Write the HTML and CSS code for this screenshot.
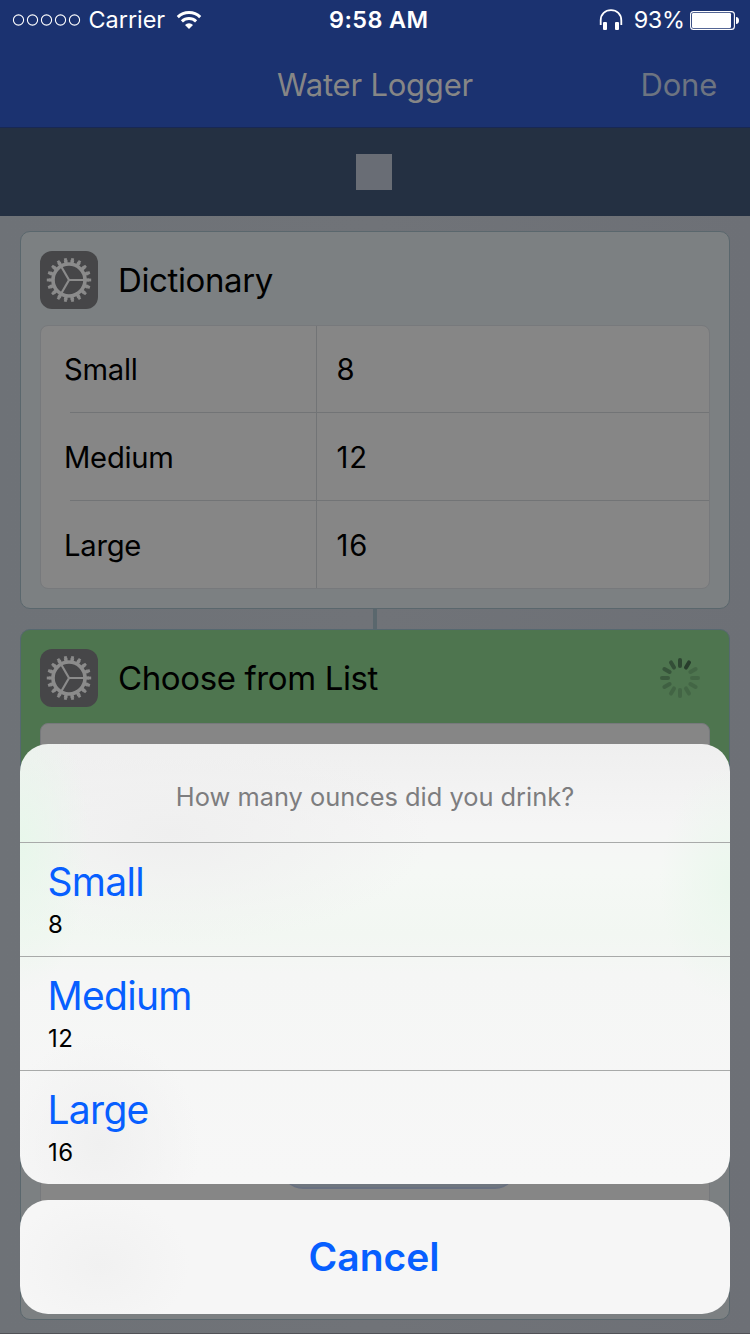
FILE: index.html
```html
<!DOCTYPE html>
<html lang="en">
<head>
<meta charset="utf-8">
<title>Water Logger</title>
<link rel="stylesheet" href="styles.css">
</head>
<body>
<svg width="0" height="0" class="defs" aria-hidden="true">
  <defs>
    <g id="gear">
      <circle r="16" fill="none" stroke="currentColor" stroke-width="3.6"/>
      <circle r="18.6" fill="none" stroke="currentColor" stroke-width="3.4" pathLength="180" stroke-dasharray="5.4 4.6" stroke-dashoffset="2.7"/>
      <circle r="21" fill="none" stroke="currentColor" stroke-width="2.4" pathLength="180" stroke-dasharray="3.8 6.2" stroke-dashoffset="1.9"/>
      <path d="M0 0H15M0 0L-7.5 -13M0 0L-7.5 13" stroke="currentColor" stroke-width="2.2" fill="none"/>
    </g>
  </defs>
</svg>
<div class="screen">
  <header class="nav">
    <div class="status">
      <div class="status-left">
        <svg class="dots" width="70" height="14" viewBox="0 0 70 14" fill="none" stroke="#fff" stroke-width="1.1"><circle cx="6.5" cy="7" r="5.1"/><circle cx="20.5" cy="7" r="5.1"/><circle cx="34.5" cy="7" r="5.1"/><circle cx="48.5" cy="7" r="5.1"/><circle cx="62.5" cy="7" r="5.1"/></svg>
        <span class="carrier">Carrier</span>
        <svg class="wifi" width="26" height="20" viewBox="0 0 26 20" fill="none" stroke="#fff" stroke-width="3"><path d="M1.8 7.1A16 16 0 0 1 24.2 7.1"/><path d="M5.9 11.3A10.3 10.3 0 0 1 20.1 11.3"/><path d="M13 19L9 14.9A5.8 5.8 0 0 1 17 14.9Z" fill="#fff" stroke="none"/></svg>
      </div>
      <span class="time">9:58 AM</span>
      <div class="status-right">
        <svg class="phones" width="24" height="22" viewBox="0 0 24 22"><path d="M1.7 16V11.5C1.7 5 6.2 1.2 12 1.2S22.3 5 22.3 11.5V16" fill="none" stroke="#fff" stroke-width="1.8"/><rect x="4" y="13" width="4" height="8" rx="1" fill="#fff"/><rect x="16" y="13" width="4" height="8" rx="1" fill="#fff"/></svg>
        <span class="percent">93%</span>
        <svg class="battery" width="50" height="20" viewBox="0 0 50 20"><rect x=".6" y="1.6" width="43.8" height="17.8" rx="3" fill="none" stroke="#fff" stroke-width="1.1"/><rect x="2" y="3" width="39" height="15" rx="1.3" fill="#fff"/><path d="M46 7Q49 7.4 49 10.5T46 14Z" fill="#fff"/></svg>
      </div>
    </div>
    <div class="titlebar"><span class="title">Water Logger</span><span class="done">Done</span></div>
  </header>
  <div class="runbar"><div class="stop"></div></div>
  <main class="flow">
    <section class="card card-dictionary">
      <div class="card-head">
        <svg class="icon" width="58" height="58" viewBox="-29 -29 58 58"><rect x="-29" y="-29" width="58" height="58" rx="12" fill="#464648"/><use href="#gear"/></svg>
        <h2 class="name">Dictionary</h2>
      </div>
      <div class="table">
        <div class="row"><span class="key">Small</span><span class="val">8</span></div>
        <div class="row"><span class="key">Medium</span><span class="val">12</span></div>
        <div class="row"><span class="key">Large</span><span class="val">16</span></div>
      </div>
    </section>
    <div class="link"></div>
    <section class="card card-choose">
      <div class="card-head">
        <svg class="icon" width="58" height="58" viewBox="-29 -29 58 58"><rect x="-29" y="-29" width="58" height="58" rx="12" fill="#464648"/><use href="#gear"/></svg>
        <h2 class="name">Choose from List</h2>
        <svg class="spinner" width="40" height="40" viewBox="-20 -20 40 40" stroke="#263b2b" stroke-width="4" stroke-linecap="round">
          <path d="M0-12V-18" opacity=".78"/><path d="M0-12V-18" transform="rotate(30)" opacity=".95"/><path d="M0-12V-18" transform="rotate(60)" opacity=".25"/><path d="M0-12V-18" transform="rotate(90)" opacity=".25"/><path d="M0-12V-18" transform="rotate(120)" opacity=".25"/><path d="M0-12V-18" transform="rotate(150)" opacity=".25"/><path d="M0-12V-18" transform="rotate(180)" opacity=".27"/><path d="M0-12V-18" transform="rotate(210)" opacity=".28"/><path d="M0-12V-18" transform="rotate(240)" opacity=".35"/><path d="M0-12V-18" transform="rotate(270)" opacity=".46"/><path d="M0-12V-18" transform="rotate(300)" opacity=".55"/><path d="M0-12V-18" transform="rotate(330)" opacity=".66"/>
        </svg>
      </div>
      <div class="panel"></div>
    </section>
    <div class="link"></div>
    <section class="card card-last"><div class="panel panel-last"><div class="pill"></div></div></section>
  </main>
</div>
<div class="overlay">
  <div class="sheet">
    <p class="prompt"><span>How many ounces did you drink?</span></p>
    <div class="option"><span class="label">Small</span><span class="sub">8</span></div>
    <div class="option"><span class="label">Medium</span><span class="sub">12</span></div>
    <div class="option"><span class="label">Large</span><span class="sub">16</span></div>
  </div>
  <div class="cancel"><span>Cancel</span></div>
</div>
</body>
</html>
```
FILE: styles.css
```css
* { box-sizing: border-box; }
body { margin: 0; width: 750px; height: 1334px; overflow: hidden; position: relative; font-family: Inter, "Liberation Sans", sans-serif; background: #707378; color: #000; }
.defs { position: absolute; }
.screen { height: 1334px; display: flex; flex-direction: column; background: linear-gradient(90deg, #6e7277, #707378 50%, #6d7076); border-bottom: 1px solid #515257; }
.nav { height: 128px; flex: none; background: #1b3270; border-bottom: 1px solid #182854; }
.status { height: 40px; display: grid; grid-template-columns: 1fr auto 1fr; align-items: center; padding: 0 10px 0 12px; color: #fff; font-size: 23.4px; line-height: 40px; }
.status-left, .status-right { display: flex; align-items: center; height: 40px; }
.status-right { justify-content: flex-end; }
.carrier { margin-left: 6.5px; }
.wifi { margin-left: 10.5px; }
.time { font-weight: 600; letter-spacing: .4px; margin-left: 5.5px; }
.percent { margin: 0 5.5px 0 11px; letter-spacing: -.4px; }
.titlebar { height: 88px; display: grid; grid-template-columns: 1fr auto 1fr; align-items: center; padding: 1px 33px 0; font-size: 31px; letter-spacing: -.22px; color: #868686; }
.title { grid-column: 2; }
.done { justify-self: end; color: #6d7481; }
.runbar { height: 88px; flex: none; background: #243042; display: flex; justify-content: center; align-items: center; padding-right: 2px; }
.stop { width: 36px; height: 36px; background: #696d75; }
.flow { padding: 15px 20px; display: flex; flex-direction: column; align-items: center; }
.card { width: 710px; flex: none; border: 1px solid #5a676d; border-radius: 10px; background: #7c8082; padding: 19px; }
.card-dictionary { height: 378px; }
.card-choose { height: 323px; background: #4e754f; border-color: #566870; }
.card-last { height: 348px; }
.card-head { height: 58px; display: flex; align-items: center; }
.icon { color: #8b8b8b; }
.name { margin: 0 auto 0 20px; font-size: 33px; font-weight: 400; line-height: 57px; letter-spacing: -.38px; }
.spinner { margin-right: 10px; }
.table { margin-top: 16px; height: 264px; border: 1px solid #77797c; border-radius: 8px; background: #868686; overflow: hidden; }
.row { height: 88px; display: flex; font-size: 29.2px; line-height: 87px; letter-spacing: -.25px; background: linear-gradient(#727476, #727476) 29px 86px / 100% 1px no-repeat; }
.row:last-child { background: none; }
.key { width: 276px; padding-left: 23px; border-right: 1px solid #727476; }
.val { padding-left: 19.5px; letter-spacing: .9px; }
.link { width: 4px; height: 20px; flex: none; background: #5a676d; }
.panel { margin-top: 16px; height: 200px; border: 1px solid #77797c; border-radius: 8px; background: #868686; }
.panel-last { margin: 0; height: 290px; display: flex; justify-content: center; padding: 130px 0 0 48px; }
.pill { width: 236px; height: 66px; border-radius: 22px; background: #6f767f; border-bottom: 2px solid #687080; }
.overlay { position: absolute; inset: 0; padding: 744px 20px 20px; display: flex; flex-direction: column; gap: 16px; }
.sheet { height: 440px; border-radius: 28px; overflow: hidden; background:
  radial-gradient(ellipse 70px 150px at 0 100px, #e8f7eb, transparent),
  radial-gradient(ellipse 70px 120px at 100% 140px, #ebf7ed, transparent),
  radial-gradient(ellipse 100px 110px at 80px 400px, #f0f0f0, transparent),
  radial-gradient(ellipse 260px 110px at 150px 90px, #efefef, transparent),
  linear-gradient(#efefef 0, #f5f5f5 80px, #f5f8f5 130px, #f2f7f2 190px, #f5f6f5 230px, #f7f7f7 100%); }
.prompt { margin: 0; height: 98px; display: flex; align-items: center; justify-content: center; padding-top: 7px; font-size: 25.4px; color: #7d7d7f; }
.option { height: 114px; border-top: 1px solid #a8aaa9; padding: 15px 27.5px 0; display: flex; flex-direction: column; }
.label { font-size: 39px; line-height: 48px; color: #075fff; letter-spacing: -.7px; }
.sub { font-size: 24px; line-height: 38px; padding-left: .5px; letter-spacing: .4px; }
.cancel { height: 114px; border-radius: 28px; background: radial-gradient(ellipse 90px 70px at 80px 65px, #f1f1f1, transparent), #f6f6f6; display: flex; align-items: center; justify-content: center; padding: 0 2px 2px 0; font-size: 39px; font-weight: 600; color: #075fff; }
```
